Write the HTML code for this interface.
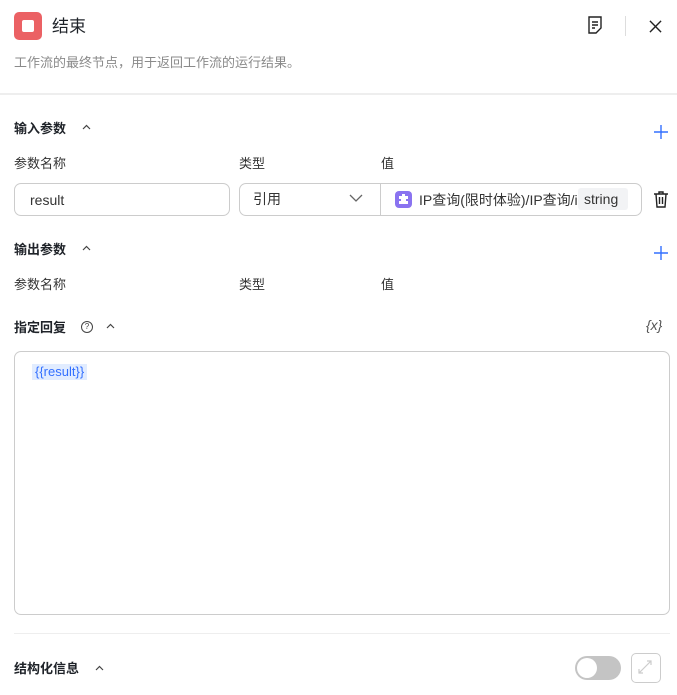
<!DOCTYPE html><html><head><meta charset="utf-8"><style>
body{margin:0;width:677px;height:695px;overflow:hidden;background:#fff;font-family:"Liberation Sans","Noto Sans CJK SC",sans-serif;color:#1f2329;position:relative}
.a{position:absolute;white-space:nowrap}
.h{font-size:13px;font-weight:bold;color:#1f2329}
.l{font-size:13px;color:#333}
</style></head><body>
<div class="a" style="left:14px;top:12px;width:28px;height:28px;border-radius:5px;background:#eb6164"></div>
<div class="a" style="left:22px;top:20px;width:12px;height:12px;border-radius:2px;background:#fff"></div>
<div class="a" style="left:52px;top:12px;font-size:17px;color:#1f2329">结束</div>
<svg class="a" style="left:585px;top:15px" width="20" height="20" viewBox="0 0 20 20" fill="none" stroke="#222" stroke-width="1.4"><path d="M4 2h12v11l-5 5H4z"/><path d="M7 7h6M7 10h6M7 13h3"/></svg>
<div class="a" style="left:625px;top:16px;width:1px;height:20px;background:#ddd"></div>
<svg class="a" style="left:649px;top:20px" width="13" height="13" viewBox="0 0 14 14" stroke="#222" stroke-width="1.5"><path d="M1 1l12 12M13 1L1 13"/></svg>
<div class="a" style="left:14px;top:52px;font-size:13px;color:#8a8a8a">工作流的最终节点，用于返回工作流的运行结果。</div>
<div class="a" style="left:0;top:93px;width:677px;height:2px;background:#eee"></div>

<div class="a h" style="left:14px;top:118px">输入参数</div>
<svg class="a" style="left:82px;top:124px" width="9" height="6" viewBox="0 0 9 6" fill="none" stroke="#444" stroke-width="1.2"><path d="M1 5l3.5-3.5L8 5"/></svg>
<svg class="a" style="left:654px;top:125px" width="14" height="14" viewBox="0 0 14 14" stroke="#3370ff" stroke-width="1.4"><path d="M7 0v14M0 7h14"/></svg>
<div class="a l" style="left:14px;top:153px">参数名称</div>
<div class="a l" style="left:239px;top:153px">类型</div>
<div class="a l" style="left:381px;top:153px">值</div>
<div class="a" style="left:14px;top:183px;width:214px;height:31px;border:1px solid #ccc;border-radius:7px"></div>
<div class="a" style="left:30px;top:192px;font-size:14px;color:#333">result</div>
<div class="a" style="left:239px;top:183px;width:401px;height:31px;border:1px solid #ccc;border-radius:7px"></div>
<div class="a" style="left:380px;top:184px;width:1px;height:31px;background:#ccc"></div>
<div class="a" style="left:253px;top:189px;font-size:14px;color:#333">引用</div>
<svg class="a" style="left:349px;top:194px" width="14" height="9" viewBox="0 0 14 9" fill="none" stroke="#666" stroke-width="1.3"><path d="M1 1l6 6 6-6"/></svg>
<div class="a" style="left:395px;top:191px;width:17px;height:17px;border-radius:4px;background:#8a73f0"></div>
<svg class="a" style="left:397px;top:193px" width="13" height="13" viewBox="0 0 13 13" fill="#fff"><path d="M5 1h3v2h3v3H9v2h2v3H2V8h2V6H2V3h3z"/></svg>
<div class="a" style="left:419px;top:190px;font-size:14px;color:#333;width:158px;overflow:hidden">IP查询(限时体验)/IP查询/i</div>
<div class="a" style="left:578px;top:188px;width:50px;height:22px;background:#f2f3f5;border-radius:3px"></div>
<div class="a" style="left:584px;top:191px;font-size:14px;color:#333">string</div>
<svg class="a" style="left:653px;top:191px" width="16" height="17" viewBox="0 0 16 17" fill="none" stroke="#222" stroke-width="1.4"><path d="M1 3h14M6 3V1h4v2M3 3l1 13h8l1-13M6.5 6v7M9.5 6v7"/></svg>

<div class="a h" style="left:14px;top:239px">输出参数</div>
<svg class="a" style="left:82px;top:245px" width="9" height="6" viewBox="0 0 9 6" fill="none" stroke="#444" stroke-width="1.2"><path d="M1 5l3.5-3.5L8 5"/></svg>
<svg class="a" style="left:654px;top:246px" width="14" height="14" viewBox="0 0 14 14" stroke="#3370ff" stroke-width="1.4"><path d="M7 0v14M0 7h14"/></svg>
<div class="a l" style="left:14px;top:274px">参数名称</div>
<div class="a l" style="left:239px;top:274px">类型</div>
<div class="a l" style="left:381px;top:274px">值</div>

<div class="a h" style="left:14px;top:317px">指定回复</div>
<div class="a" style="left:81px;top:321px;width:10px;height:10px;border:1px solid #444;border-radius:50%;font-size:8px;text-align:center;line-height:10px;color:#444">?</div>
<svg class="a" style="left:106px;top:323px" width="9" height="6" viewBox="0 0 9 6" fill="none" stroke="#444" stroke-width="1.2"><path d="M1 5l3.5-3.5L8 5"/></svg>
<div class="a" style="left:646px;top:317px;font-size:14px;color:#555;font-style:italic">{x}</div>
<div class="a" style="left:14px;top:351px;width:654px;height:262px;border:1px solid #ccc;border-radius:7px"></div>
<div class="a" style="left:32px;top:364px;height:16px;padding:0 3px;background:#e1ecff;color:#3370ff;font-size:13px;line-height:16px">{{result}}</div>
<div class="a" style="left:14px;top:633px;width:656px;height:1px;background:#eee"></div>
<div class="a h" style="left:14px;top:658px">结构化信息</div>
<svg class="a" style="left:95px;top:665px" width="9" height="6" viewBox="0 0 9 6" fill="none" stroke="#444" stroke-width="1.2"><path d="M1 5l3.5-3.5L8 5"/></svg>
<div class="a" style="left:575px;top:656px;width:46px;height:24px;border-radius:12px;background:#c4c4c4"></div>
<div class="a" style="left:577px;top:658px;width:20px;height:20px;border-radius:50%;background:#fff"></div>
<div class="a" style="left:631px;top:653px;width:28px;height:28px;border:1px solid #ccc;border-radius:5px"></div>
<svg class="a" style="left:638px;top:660px" width="14" height="14" viewBox="0 0 14 14" fill="none" stroke="#ccc" stroke-width="1.2"><path d="M1 13L13 1M9 1h4v4M1 9v4h4"/></svg>
</body></html>
